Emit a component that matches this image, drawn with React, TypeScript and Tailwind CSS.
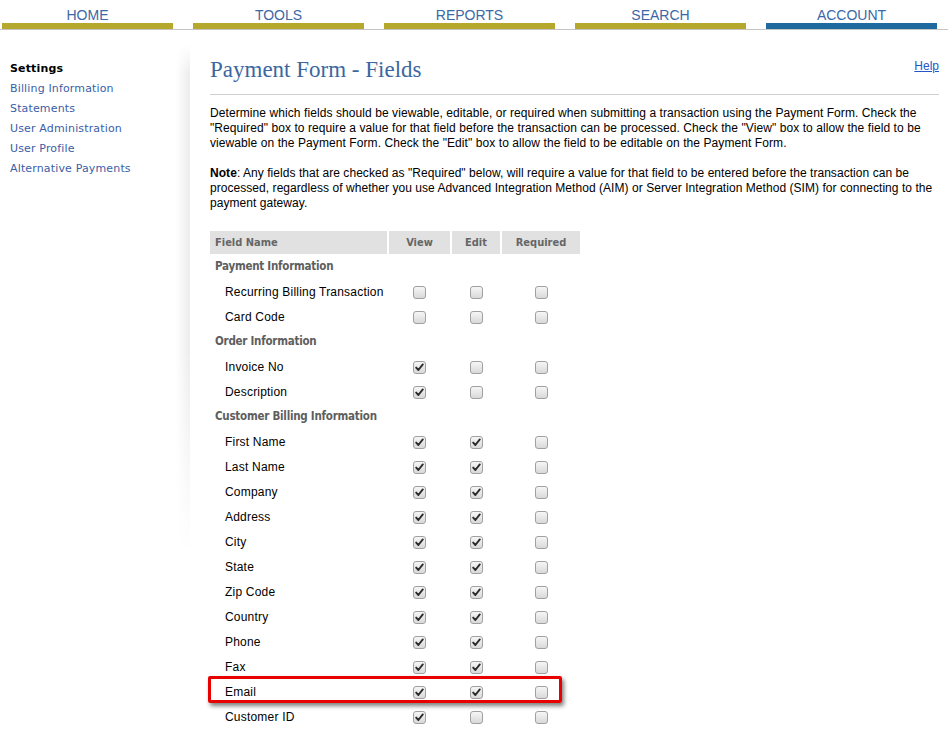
import React from "react";

const tabs = ["HOME", "TOOLS", "REPORTS", "SEARCH", "ACCOUNT"];
const sideLinks = ["Billing Information", "Statements", "User Administration", "User Profile", "Alternative Payments"];

type Row = { label: string; group?: boolean; v?: boolean; e?: boolean; r?: boolean };

const rows: Row[] = [
  { label: "Payment Information", group: true },
  { label: "Recurring Billing Transaction" },
  { label: "Card Code" },
  { label: "Order Information", group: true },
  { label: "Invoice No", v: true },
  { label: "Description", v: true },
  { label: "Customer Billing Information", group: true },
  { label: "First Name", v: true, e: true },
  { label: "Last Name", v: true, e: true },
  { label: "Company", v: true, e: true },
  { label: "Address", v: true, e: true },
  { label: "City", v: true, e: true },
  { label: "State", v: true, e: true },
  { label: "Zip Code", v: true, e: true },
  { label: "Country", v: true, e: true },
  { label: "Phone", v: true, e: true },
  { label: "Fax", v: true, e: true },
  { label: "Email", v: true, e: true },
  { label: "Customer ID", v: true },
];

function Box({ checked }: { checked?: boolean }) {
  return (
    <span className="relative inline-flex h-[13px] w-[13px] items-center justify-center rounded-[3px] border border-[#a0a0a0] bg-gradient-to-b from-[#f6f6f6] to-[#d9d9d9]">
      {checked && (
        <svg width="9" height="9" viewBox="0 0 9 9" className="block">
          <path d="M1.2 4.6 L3.4 7 L7.8 1.4" fill="none" stroke="#2b2b2b" strokeWidth="1.9" strokeLinecap="round" strokeLinejoin="round" />
        </svg>
      )}
    </span>
  );
}

export default function App() {
  return (
    <div className="min-h-[731px] w-[948px] overflow-hidden bg-white font-['Liberation_Sans',Arial,sans-serif]">
      {/* top nav */}
      <div className="flex h-[30px] gap-[20px] border-b border-[#c4c4c4] pl-[2px]">
        {tabs.map((t) => (
          <div
            key={t}
            className={`flex h-[29px] w-[171px] items-start justify-center border-b-[6px] pt-[7px] text-[14px] leading-[17px] text-[#3c68a6] ${
              t === "ACCOUNT" ? "border-[#1f6ba0]" : "border-[#b5a82d]"
            }`}
          >
            {t}
          </div>
        ))}
      </div>

      <div className="flex">
        {/* sidebar */}
        <div className="relative w-[190px] shrink-0 pl-[10px] pt-[29px] font-['DejaVu_Sans',Verdana,sans-serif] text-[11px] leading-[20px] tracking-[0.15px]">
          <div className="absolute right-0 top-[14px] h-[510px] w-[14px] bg-gradient-to-r from-white to-[#ececec] [mask-image:linear-gradient(to_bottom,transparent,black_6%,black_60%,transparent)]" />
          <div className="font-bold text-black">Settings</div>
          {sideLinks.map((l) => (
            <div key={l} className="text-[#3a5ea6]">
              {l}
            </div>
          ))}
        </div>

        {/* content */}
        <div className="w-[749px] min-w-0 shrink-0 pl-[20px]">
          <div className="flex items-end justify-between border-b border-[#cfcfcf] pb-[11px] pt-[27px]">
            <div className="font-['Liberation_Serif',Georgia,serif] text-[23px] leading-[26px] text-[#3c67a0]">
              Payment Form - Fields
            </div>
            <a className="mb-[10px] text-[12px] leading-[14px] text-[#2356c8] underline">Help</a>
          </div>

          <p className="mt-[11px] whitespace-nowrap text-[12px] leading-[15px] tracking-[0.08px] text-black">
            Determine which fields should be viewable, editable, or required when submitting a transaction using the Payment Form. Check the
            <br />
            "Required" box to require a value for that field before the transaction can be processed. Check the "View" box to allow the field to be
            <br />
            viewable on the Payment Form. Check the "Edit" box to allow the field to be editable on the Payment Form.
          </p>
          <p className="mt-[15px] whitespace-nowrap text-[12px] leading-[15px] tracking-[0.05px] text-black">
            <b>Note</b>: Any fields that are checked as "Required" below, will require a value for that field to be entered before the transaction can be
            <br />
            processed, regardless of whether you use Advanced Integration Method (AIM) or Server Integration Method (SIM) for connecting to the
            <br />
            payment gateway.
          </p>

          <div className="relative mt-[20px] w-[370px]">
            <div className="grid grid-cols-[177px_61px_48px_78px] gap-x-[2px] font-['DejaVu_Sans_Condensed','DejaVu_Sans',Verdana,sans-serif] text-[11px] font-bold text-[#666]">
              <div className="flex h-[23px] items-center bg-[#e1e1e1] pl-[5px] pt-[2px]">Field Name</div>
              <div className="flex h-[23px] items-center justify-center bg-[#e1e1e1] pt-[2px]">View</div>
              <div className="flex h-[23px] items-center justify-center bg-[#e1e1e1] pt-[2px]">Edit</div>
              <div className="flex h-[23px] items-center justify-center bg-[#e1e1e1] pt-[2px]">Required</div>
            </div>
            <div className="mt-[1px]">
              {rows.map((r) =>
                r.group ? (
                  <div
                    key={r.label}
                    className="flex h-[25px] items-center pb-[1px] pl-[5px] font-['DejaVu_Sans_Condensed','DejaVu_Sans',Tahoma,sans-serif] text-[11.5px] font-bold tracking-[-0.25px] text-[#5e5e5e]"
                  >
                    {r.label}
                  </div>
                ) : (
                  <div key={r.label} className="grid h-[25px] grid-cols-[177px_61px_48px_78px] gap-x-[2px] text-[12px] text-black">
                    <div className="flex items-center pb-[2px] pl-[15px] tracking-[0.2px]">{r.label}</div>
                    <div className="flex items-center justify-center">
                      <Box checked={r.v} />
                    </div>
                    <div className="flex items-center justify-center">
                      <Box checked={r.e} />
                    </div>
                    <div className="flex items-center justify-center">
                      <Box checked={r.r} />
                    </div>
                  </div>
                )
              )}
            </div>
            <div className="pointer-events-none absolute left-[-2px] top-[445px] h-[27px] w-[354px] rounded-[2px] border-[3px] border-[#e80000] shadow-[2px_3px_4px_rgba(0,0,0,0.5)]" />
          </div>
        </div>
      </div>
    </div>
  );
}
